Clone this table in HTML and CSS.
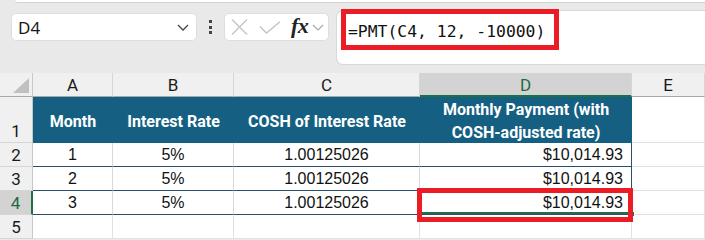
FILE: index.html
```html
<!DOCTYPE html>
<html>
<head>
<meta charset="utf-8">
<link rel="stylesheet" href="styles.css">
</head>
<body>
<div class="app">
  <div class="ribbon-edge"></div>
  <div class="formula-row">
    <div class="namebox">
      <span class="nb-text">D4</span>
      <svg class="nb-chev" width="12" height="7" viewBox="0 0 12 7"><path d="M1 1 L6 6 L11 1" fill="none" stroke="#444" stroke-width="1.3"/></svg>
    </div>
    <div class="dots"><span></span><span></span><span></span></div>
    <div class="fbtns">
      <svg class="ic-x" width="17" height="16" viewBox="0 0 17 16"><path d="M1 0.5 L16 15.5 M16 0.5 L1 15.5" stroke="#c4c4c4" stroke-width="1.4" fill="none"/></svg>
      <svg class="ic-check" width="22" height="13" viewBox="0 0 22 13"><path d="M1 5.5 L7.5 12 L21 0.8" stroke="#c4c4c4" stroke-width="1.4" fill="none"/></svg>
      <span class="fx">fx</span>
      <svg class="ic-chev" width="12" height="7" viewBox="0 0 12 7"><path d="M1 1 L6 6 L11 1" fill="none" stroke="#a8a8a8" stroke-width="1.2"/></svg>
    </div>
    <div class="fbar">
      <span class="ftext">=PMT(C4, 12, -10000)</span>
      <div class="redbox fbox"></div>
    </div>
  </div>
  <div class="sheet">
    <div class="c corner"><span class="tri"></span></div>
    <div class="c ch">A</div>
    <div class="c ch">B</div>
    <div class="c ch">C</div>
    <div class="c ch sel">D</div>
    <div class="c ch">E</div>

    <div class="c rh rh-bottom">1</div>
    <div class="c th">Month</div>
    <div class="c th">Interest Rate</div>
    <div class="c th">COSH of Interest Rate</div>
    <div class="c th">Monthly Payment (with<br>COSH-adjusted rate)</div>
    <div class="c"></div>

    <div class="c rh">2</div>
    <div class="c td center">1</div>
    <div class="c td center">5%</div>
    <div class="c td center">1.00125026</div>
    <div class="c td right last">$10,014.93</div>
    <div class="c"></div>

    <div class="c rh">3</div>
    <div class="c td center">2</div>
    <div class="c td center">5%</div>
    <div class="c td center">1.00125026</div>
    <div class="c td right last">$10,014.93</div>
    <div class="c"></div>

    <div class="c rh rsel">4</div>
    <div class="c td center">3</div>
    <div class="c td center">5%</div>
    <div class="c td center">1.00125026</div>
    <div class="c td right last active">$10,014.93<span class="handle"></span><div class="redbox cellbox"></div></div>
    <div class="c"></div>

    <div class="c rh">5</div>
    <div class="c"></div>
    <div class="c"></div>
    <div class="c"></div>
    <div class="c"></div>
    <div class="c"></div>
  </div>
</div>
</body>
</html>
```

FILE: styles.css
```css
* { box-sizing: border-box; }
html, body { margin: 0; padding: 0; }
body {
  width: 705px;
  height: 240px;
  overflow: hidden;
  background: #e9e9e9;
  font-family: "Liberation Sans", Arial, sans-serif;
}
.app { width: 705px; height: 240px; overflow: hidden; }

.ribbon-edge {
  height: 3px;
  margin-left: 15px;
  background: #ffffff;
  border-bottom: 1px solid #d2d2d2;
  border-bottom-left-radius: 4px;
}

.formula-row {
  height: 70px;
  display: flex;
  align-items: flex-start;
  padding-top: 10px;
  padding-left: 11px;
}

.namebox {
  width: 186px;
  height: 28px;
  background: #fff;
  border: 1px solid #dedede;
  border-radius: 5px;
  display: flex;
  align-items: center;
  justify-content: space-between;
  padding: 0 7px 0 6px;
}
.nb-text {
  font-family: "Noto Sans", "Open Sans", sans-serif;
  font-size: 17px;
  color: #1a1a1a;
}
.dots {
  width: 27px;
  height: 28px;
  display: flex;
  flex-direction: column;
  align-items: center;
  justify-content: center;
  gap: 2.5px;
}
.dots span {
  width: 3px;
  height: 3px;
  background: #444;
}
.fbtns {
  width: 105px;
  height: 28px;
  background: #fff;
  border: 1px solid #dedede;
  border-radius: 5px;
  display: flex;
  align-items: center;
  padding-left: 6px;
}
.ic-x { margin-right: 11px; }
.ic-check { margin-right: 10px; margin-top: 1px; }
.fx {
  font-family: "Liberation Serif", "Times New Roman", serif;
  font-style: italic;
  font-weight: bold;
  font-size: 22px;
  color: #222;
  line-height: 1;
  margin-top: -2px;
  letter-spacing: -0.5px;
}
.ic-chev { margin-left: 4px; }

.fbar {
  position: relative;
  margin-left: 7px;
  margin-top: -3px;
  flex: 1;
  height: 55px;
  background: #fff;
  border: 1px solid #d8d8d8;
  border-right: none;
  border-radius: 7px 0 0 7px;
  padding: 11px 0 0 11px;
}
.ftext {
  font-family: "DejaVu Sans Mono", "Liberation Mono", monospace;
  font-size: 16.4px;
  color: #111;
  line-height: 20px;
  white-space: pre;
}
.redbox {
  position: absolute;
  border: 5px solid #ec1c24;
  pointer-events: none;
}
.fbox {
  left: 4px;
  top: -2px;
  width: 218px;
  height: 41px;
}

.sheet {
  display: grid;
  grid-template-columns: 33px 80px 121px 186px 212px 73px;
  grid-template-rows: 24px 46px 24px 24px 24px 24px;
  background: #fff;
}
.c {
  border-right: 1px solid #e1e1e1;
  border-bottom: 1px solid #e1e1e1;
  position: relative;
  font-size: 16px;
  color: #111;
}
.corner {
  background: #f0f0f0;
  border-right: 1px solid #c8c8c8;
  border-bottom: 1px solid #a8a8a8;
}
.tri {
  position: absolute;
  right: 3px;
  bottom: 3px;
  width: 0;
  height: 0;
  border-left: 16px solid transparent;
  border-bottom: 15px solid #c0c0c0;
}
.ch {
  background: #f0f0f0;
  border-right: 1px solid #d6d6d6;
  border-bottom: 1px solid #a8a8a8;
  display: flex;
  align-items: center;
  justify-content: center;
  font-family: "Roboto", "Noto Sans", sans-serif;
  font-size: 17px;
  color: #1a1a1a;
}
.ch.sel {
  background: #d3d3d3;
  color: #1e6b41;
  border-bottom: 2px solid #1e7145;
  padding-top: 1px;
}
.rh {
  background: #f0f0f0;
  border-right: 1px solid #c8c8c8;
  border-bottom: 1px solid #d6d6d6;
  display: flex;
  align-items: center;
  justify-content: center;
  font-family: "Roboto", "Noto Sans", sans-serif;
  font-size: 17px;
  color: #1a1a1a;
}
.rh-bottom { align-items: flex-end; padding-bottom: 1px; }
.rh.rsel {
  background: #d3d3d3;
  color: #1e6b41;
  border-right: 2px solid #1e7145;
}
.th {
  background: #156082;
  border-right: none;
  border-bottom: 1px solid #156082;
  color: #fff;
  font-family: "Roboto", "Noto Sans", sans-serif;
  font-weight: bold;
  font-size: 16px;
  line-height: 23px;
  text-align: center;
  display: flex;
  align-items: center;
  justify-content: center;
  padding-top: 3px;
}
.td {
  border-bottom: 1px solid #28506c;
  border-right: 1px solid #d9d9d9;
  display: flex;
  align-items: center;
  font-family: "Liberation Sans", Arial, sans-serif;
  font-size: 16px;
  padding-top: 1px;
}
.td.center { justify-content: center; }
.td.right { justify-content: flex-end; padding-right: 8px; }
.td.last { border-right: 1px solid #28506c; }
.active {
  box-shadow: inset 0 0 0 2px #1e7145;
}
.handle {
  position: absolute;
  right: -4px;
  bottom: -3px;
  width: 6px;
  height: 6px;
  background: #1e7145;
  border: 1px solid #fff;
  z-index: 2;
}
.cellbox {
  left: -3px;
  top: -3px;
  width: 216px;
  height: 34px;
  z-index: 3;
}
```
